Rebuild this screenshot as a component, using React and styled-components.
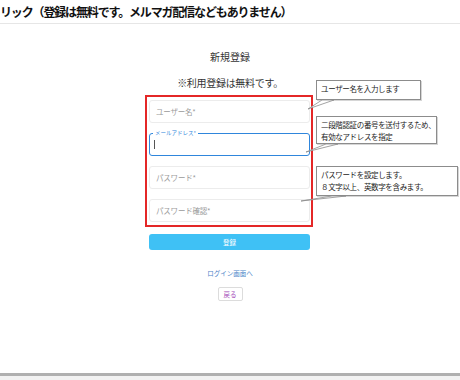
import React from "react";
import styled, { createGlobalStyle } from "styled-components";

const GlobalStyle = createGlobalStyle`
  html, body {
    margin: 0;
    padding: 0;
    background: #ffffff;
  }
  body {
    font-family: "Noto Sans CJK JP", "Noto Sans", sans-serif;
    color: #333;
  }
`;

const Page = styled.div`
  position: relative;
  width: 460px;
  height: 380px;
  overflow: hidden;
  display: flex;
  flex-direction: column;
  background: #fff;
`;

const Header = styled.div`
  height: 23px;
  border-bottom: 1px solid #e6e6e6;
  display: flex;
  align-items: center;
`;

const HeaderTitle = styled.h1`
  margin: 0;
  font-size: 12px;
  font-weight: 700;
  letter-spacing: -1.15px;
  color: #111;
  white-space: nowrap;
  line-height: 16px;
`;

const Main = styled.main`
  flex: 1;
  display: flex;
  flex-direction: column;
  align-items: center;
`;

const Title = styled.div`
  margin-top: 26px;
  font-size: 10px;
  line-height: 14px;
  color: #333;
`;

const Note = styled.div`
  margin-top: 12px;
  font-size: 10px;
  line-height: 14px;
  color: #333;
  letter-spacing: -0.3px;
`;

const Highlight = styled.div`
  margin-top: 5px;
  margin-left: -2px;
  width: 168px;
  box-sizing: border-box;
  border: 2px solid #e42727;
  padding: 3px 1px 3px 2px;
  display: flex;
  flex-direction: column;
  gap: 10px;
`;

const Field = styled.div`
  position: relative;
  height: 23px;
  box-sizing: border-box;
  border: 1px solid ${p => (p.$focused ? "#2f86dc" : "#ececec")};
  border-radius: 3px;
  display: flex;
  align-items: center;
  padding-left: 6px;
`;

const Placeholder = styled.span`
  font-size: 7.5px;
  color: #9a9a9a;
  letter-spacing: -0.2px;
`;

const FloatLabel = styled.span`
  position: absolute;
  top: -5px;
  left: 3px;
  padding: 0 2px;
  background: #fff;
  font-size: 5.5px;
  line-height: 8px;
  color: #2f86dc;
`;

const Caret = styled.span`
  width: 1px;
  height: 9px;
  background: #555;
  margin-left: -2px;
`;

const SubmitButton = styled.button`
  margin-top: 7px;
  margin-left: -1px;
  width: 161px;
  height: 16px;
  border: 0;
  border-radius: 3px;
  background: #3fc1f5;
  color: #fff;
  font-family: inherit;
  font-size: 6.5px;
  padding: 0;
`;

const LoginLink = styled.a`
  margin-top: 18px;
  font-size: 6.5px;
  line-height: 10px;
  color: #4a84c8;
  text-decoration: none;
`;

const BackButton = styled.button`
  margin-top: 9px;
  width: 25px;
  height: 14px;
  box-sizing: border-box;
  border: 1px solid #dcdcdc;
  border-radius: 2px;
  background: #fff;
  color: #a349b8;
  font-family: inherit;
  font-size: 6.5px;
  padding: 0;
`;

const Footer = styled.div`
  height: 4px;
  border-top: 3px solid #b0b0b0;
  background: #f2f2f2;
`;

const Callout = styled.div`
  position: absolute;
  left: ${p => p.$x}px;
  top: ${p => p.$y}px;
  width: ${p => p.$w}px;
  height: ${p => p.$h}px;
  box-sizing: border-box;
  border: 1px solid #8c8c8c;
  box-shadow: 1px 1px 0 #d6d6d6;
  background: #fff;
  padding: 2px 0 0 4px;
  font-size: 7.5px;
  line-height: 11.5px;
  color: #222;
  letter-spacing: -0.35px;
  white-space: nowrap;
`;

const Tails = styled.svg`
  position: absolute;
  left: 0;
  top: 0;
  pointer-events: none;
`;

const fields = [
  { label: "ユーザー名*" },
  { label: "メールアドレス*", focused: true },
  { label: "パスワード*" },
  { label: "パスワード確認*" },
];

const callouts = [
  { x: 316, y: 80, w: 105, h: 20, lines: ["ユーザー名を入力します"], tail: "322,100 334,100 308,109" },
  {
    x: 316, y: 116, w: 121, h: 28,
    lines: ["二段階認証の番号を送付するため、", "有効なアドレスを指定"],
    tail: "326,144 338,144 306,152",
  },
  {
    x: 316, y: 166, w: 142, h: 30,
    lines: ["パスワードを設定します。", "８文字以上、英数字を含みます。"],
    tail: "332,196 346,196 301,201",
  },
];

export default function App() {
  return (
    <Page>
      <GlobalStyle />
      <Header>
        <HeaderTitle>リック（登録は無料です。メルマガ配信などもありません）</HeaderTitle>
      </Header>
      <Main>
        <Title>新規登録</Title>
        <Note>※利用登録は無料です。</Note>
        <Highlight>
          {fields.map(f => (
            <Field key={f.label} $focused={f.focused}>
              {f.focused ? (
                <>
                  <FloatLabel>{f.label}</FloatLabel>
                  <Caret />
                </>
              ) : (
                <Placeholder>{f.label}</Placeholder>
              )}
            </Field>
          ))}
        </Highlight>
        <SubmitButton>登録</SubmitButton>
        <LoginLink href="#">ログイン画面へ</LoginLink>
        <BackButton>戻る</BackButton>
      </Main>
      <Footer />
      {callouts.map(c => (
        <Callout key={c.lines[0]} $x={c.x} $y={c.y} $w={c.w} $h={c.h}>
          {c.lines.map(l => (
            <div key={l}>{l}</div>
          ))}
        </Callout>
      ))}
      <Tails width="460" height="380" viewBox="0 0 460 380">
        {callouts.map(c => (
          <polygon key={c.tail} points={c.tail} fill="#fff" stroke="#8c8c8c" strokeWidth="0.8" />
        ))}
      </Tails>
    </Page>
  );
}
